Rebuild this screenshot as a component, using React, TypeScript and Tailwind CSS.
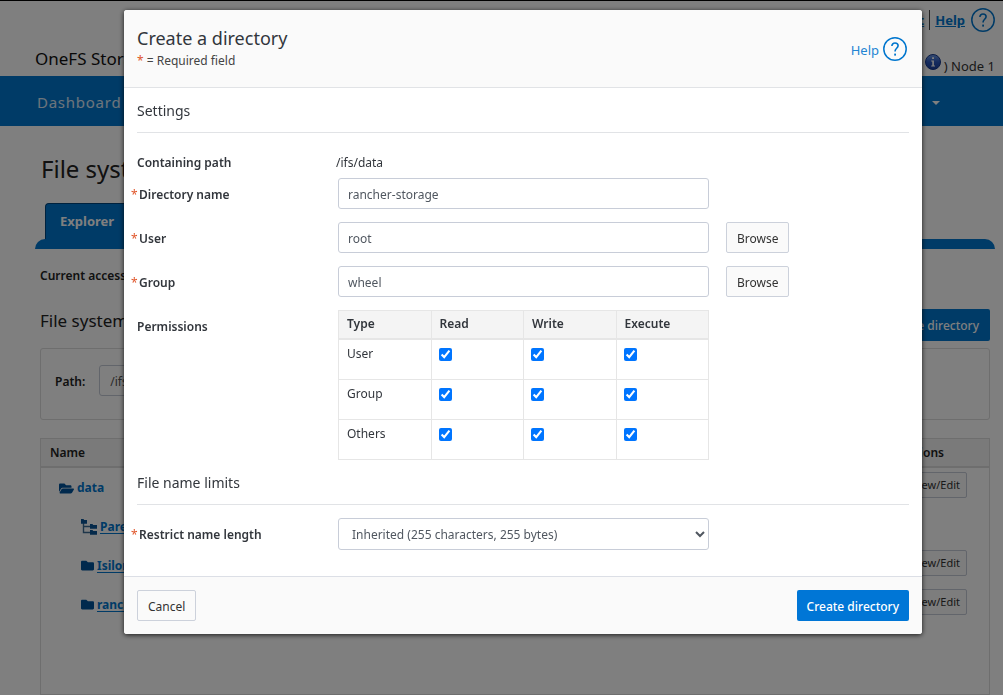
import { ReactNode } from "react";
import { FaFolder, FaFolderOpen } from "react-icons/fa";

function HelpIcon() {
  return (
    <svg viewBox="0 0 24 24" className="size-6 shrink-0" fill="none" aria-hidden="true">
      <circle cx="12" cy="12" r="11.2" stroke="#0076ce" strokeWidth="1.5" />
      <path
        d="M8.9 9.1c0-1.9 1.3-3.1 3.1-3.1s3.1 1.1 3.1 2.8c0 2.3-3 2.7-3 5.2v.4"
        stroke="#0076ce"
        strokeWidth="1.6"
      />
      <rect x="11.2" y="16.6" width="1.8" height="2" fill="#0076ce" />
    </svg>
  );
}

function InfoIcon() {
  return (
    <svg viewBox="0 0 16 16" className="size-4" aria-hidden="true">
      <defs>
        <linearGradient id="info" x1="0" y1="0" x2="0" y2="1">
          <stop offset="0" stopColor="#6f9be8" />
          <stop offset="0.5" stopColor="#2a57bd" />
          <stop offset="1" stopColor="#1a3f9c" />
        </linearGradient>
      </defs>
      <circle cx="8" cy="8" r="7.5" fill="url(#info)" stroke="#17388a" />
      <path d="M6.2 6.4h2.7v5h1.1v1H6.2v-1h1.1v-4H6.2zM7.1 3.2h1.9v1.9H7.1z" fill="#fff" />
    </svg>
  );
}

function TreeIcon() {
  return (
    <svg viewBox="0 0 16 16" className="size-4 shrink-0" aria-hidden="true">
      <path d="M2.5 4v9.5H9M2.5 7.5H9" stroke="#3c6d94" strokeWidth="1.4" fill="none" />
      <path d="M0 0h2.5l.7 1H6v3.8H0zM9 5h2.5l.7 1H16v3.8H9zM9 11h2.5l.7 1H16v3.8H9z" fill="#0a5596" />
    </svg>
  );
}

function TreeRow({ icon, name, root, action }: { icon: ReactNode; name: string; root?: boolean; action?: boolean }) {
  return (
    <tr className="h-[39px]">
      <td className={root ? "pt-0.5 pl-[18px]" : "pt-0.5 pl-10"}>
        <a href="#" className="flex items-center gap-[3px] font-bold text-[#0076ce]">
          <span className="text-[#00539b]">{icon}</span>
          <span className={root ? "" : "underline underline-offset-2"}>{name}</span>
        </a>
      </td>
      <td className="pr-[22px] pb-1 text-right">
        {action && (
          <button className="h-[26px] rounded-xs border border-[#c5cad6] bg-[#fafafa] px-1.5 text-[11px] text-[#333]">
            View/Edit
          </button>
        )}
      </td>
    </tr>
  );
}

function Page() {
  return (
    <div className="flex h-screen flex-col overflow-hidden border-t border-black bg-white">
      <header className="flex h-[75px] shrink-0 justify-between pr-2 pl-[35px]">
        <div className="mt-auto pb-[5px] text-[17px] text-[#111]">OneFS Storage Administration</div>
        <div className="flex flex-col items-end justify-between pt-[7px]">
          <div className="flex items-center gap-[5px] text-[13px] font-bold text-[#0076ce]">
            <a href="#" className="pt-0.5 underline">Log out</a>
            <span className="h-5 w-px bg-[#444]" />
            <a href="#" className="flex items-center gap-1.5">
              <span className="pt-0.5 underline">Help</span>
              <HelpIcon />
            </a>
          </div>
          <div className="flex items-start gap-[3px] text-[13px] leading-5 text-[#333]">
            <InfoIcon />
            <span className="pt-0.5">) Node 1</span>
          </div>
        </div>
      </header>
      <nav className="flex h-[50px] shrink-0 items-center justify-between bg-[#0076ce] pt-[3px] pr-[63px] pl-[37px] text-[15px] tracking-wider text-white/85">
        <a href="#">Dashboard</a>
        <a href="#" aria-label="More" className="size-0 border-x-4 border-t-4 border-x-transparent border-t-white" />
      </nav>
      <main className="flex min-h-0 flex-1 flex-col pr-2 pl-[35px] text-xs leading-5 text-[#222]">
        <h1 className="mt-[23px] ml-1.5 text-2xl leading-10">File system</h1>
        <div className="mt-[14px] flex pl-2.5">
          <a href="#" className="flex h-9 items-center rounded-tl-sm border-t border-l border-[#00447c] bg-[#0076ce] px-[14px] pb-0.5 text-[13px] font-bold text-white">
            Explorer
          </a>
        </div>
        <div className="h-2.5 shrink-0 rounded-t-[10px] bg-[#0076ce]" />
        <div className="mt-[17px] ml-[5px] font-semibold">Current access zone</div>
        <div className="mt-[23px] mr-[5px] ml-[5px] flex items-center justify-between">
          <h2 className="pb-2 text-[17px]">File system explorer</h2>
          <button className="h-8 rounded-xs bg-[#0076ce] px-[11px] pt-0.5 font-medium text-white">Create directory</button>
        </div>
        <div className="mx-[5px] mt-[7px] flex h-[72px] shrink-0 items-center gap-[14px] rounded-[3px] border border-[#dcdcdc] px-[14px]">
          <label htmlFor="path" className="pb-1 font-semibold">Path:</label>
          <input id="path" readOnly value="/ifs/data" className="mb-2 h-[31px] w-48 rounded-[3px] border border-[#c5cad6] px-2.5 pt-0.5 text-[#555]" />
        </div>
        <div className="mx-[5px] mt-[18px] flex-1 border border-[#dcdcdc]">
          <table className="w-full border-collapse">
            <thead>
              <tr className="h-7 border-b-2 border-[#dcdcdc] bg-[#f4f4f4] text-left">
                <th className="pl-[9px] font-semibold">Name</th>
                <th className="pr-[45px] text-right font-semibold">Actions</th>
              </tr>
            </thead>
            <tbody>
              <TreeRow root action icon={<FaFolderOpen className="size-[15px]" />} name="data" />
              <TreeRow icon={<TreeIcon />} name="Parent directory" />
              <TreeRow action icon={<FaFolder className="size-[13px]" />} name="Isilon" />
              <TreeRow action icon={<FaFolder className="size-[13px]" />} name="rancher" />
            </tbody>
          </table>
        </div>
      </main>
    </div>
  );
}

const inputClass = "h-[31px] w-[371px] rounded-[3px] border border-[#c8cdd8] bg-white px-[9px] pt-0.5 text-xs text-[#505760]";
const buttonClass = "h-[31px] rounded-xs border border-[#ccd1db] bg-[#fafafa] px-2.5 pt-0.5 text-xs text-[#333]";

function Label({ required, htmlFor, children }: { required?: boolean; htmlFor?: string; children: ReactNode }) {
  const text = (
    <>
      {required && <span className="w-[7px] font-normal text-[#e0562b]">*</span>}
      {children}
    </>
  );
  const className = required
    ? "flex w-[207px] shrink-0 gap-px pt-0.5 font-semibold"
    : "flex w-[207px] shrink-0 pl-1.5 font-semibold";
  return htmlFor ? (
    <label htmlFor={htmlFor} className={className}>{text}</label>
  ) : (
    <span className={className}>{text}</span>
  );
}

function SectionTitle({ children }: { children: ReactNode }) {
  return (
    <h3 className="mr-[13px] ml-1.5 border-b border-[#e1e3e6] pt-2.5 pb-[9px] text-sm leading-[25px]">
      {children}
    </h3>
  );
}

function CreateDialog() {
  return (
    <section
      role="dialog"
      aria-labelledby="dialog-title"
      className="min-w-0 flex-1 overflow-hidden rounded-[3px] bg-white text-xs leading-5 text-[#32363c] shadow-[0_1px_5px_rgba(0,0,0,0.8)]"
    >
      <header className="flex items-center justify-between border-b border-[#e1e3e6] bg-[#fafafa] pt-3.5 pr-[15px] pb-[17px] pl-[13px]">
        <div>
          <h2 id="dialog-title" className="text-lg leading-7">Create a directory</h2>
          <p className="leading-[18px] text-[#444]">
            <span className="text-[#e0562b]">*</span> = Required field
          </p>
        </div>
        <a href="#" className="flex items-center gap-1 pt-1 text-[13px] text-[#2385d3]">
          <span className="pt-0.5">Help</span>
          <HelpIcon />
        </a>
      </header>
      <div className="pb-[26px] pl-[7px]">
        <SectionTitle>Settings</SectionTitle>
        <div className="flex items-center pt-5 pb-[5px]">
          <Label>Containing path</Label>
          <span className="-ml-0.5">/ifs/data</span>
        </div>
        <div className="flex flex-col gap-[13px]">
          <div className="flex items-center">
            <Label required htmlFor="name">Directory name</Label>
            <input id="name" defaultValue="rancher-storage" className={inputClass} />
          </div>
          <div className="flex items-center">
            <Label required htmlFor="user">User</Label>
            <input id="user" defaultValue="root" className={inputClass} />
            <button className={`${buttonClass} ml-[17px]`}>Browse</button>
          </div>
          <div className="flex items-center">
            <Label required htmlFor="group">Group</Label>
            <input id="group" defaultValue="wheel" className={inputClass} />
            <button className={`${buttonClass} ml-[17px]`}>Browse</button>
          </div>
          <div className="flex">
            <div className="pt-[7px]">
              <Label>Permissions</Label>
            </div>
            <table className="w-[371px] table-fixed border-collapse">
              <thead>
                <tr className="h-7 bg-[#f4f4f4] text-left">
                  {["Type", "Read", "Write", "Execute"].map((h) => (
                    <th key={h} scope="col" className="border border-b-2 border-[#e6e6e6] px-2 font-semibold">{h}</th>
                  ))}
                </tr>
              </thead>
              <tbody>
                {["User", "Group", "Others"].map((who) => (
                  <tr key={who} className="h-10 align-top first:h-[41px]">
                    <td className="border border-[#e6e6e6] px-2 pt-1">{who}</td>
                    {["read", "write", "execute"].map((p) => (
                      <td key={p} className="border border-[#e6e6e6] px-[7px] pt-2">
                        <input type="checkbox" defaultChecked aria-label={`${who} ${p}`} className="block size-[13px]" />
                      </td>
                    ))}
                  </tr>
                ))}
              </tbody>
            </table>
          </div>
        </div>
        <SectionTitle>File name limits</SectionTitle>
        <div className="flex items-center pt-[13px]">
          <Label required htmlFor="limit">Restrict name length</Label>
          <select id="limit" className="h-8 w-[371px] rounded-[3px] border border-[#c8cdd8] bg-white px-[9px] text-xs text-[#505760]">
            <option>Inherited (255 characters, 255 bytes)</option>
          </select>
        </div>
      </div>
      <footer className="flex items-center justify-between border-t border-[#dcdfe6] bg-[#fafafa] px-[13px] py-[13px]">
        <button className={buttonClass}>Cancel</button>
        <button className="h-[31px] rounded-xs bg-[#0076d6] px-2.5 pt-0.5 text-xs font-medium text-white">Create directory</button>
      </footer>
    </section>
  );
}

export default function App() {
  return (
    <div className="font-['Noto_Sans',sans-serif]">
      <Page />
      <div className="fixed inset-0 flex items-start overflow-auto bg-black/50 pt-2.5 pr-[81px] pl-[124px]">
        <CreateDialog />
      </div>
    </div>
  );
}
